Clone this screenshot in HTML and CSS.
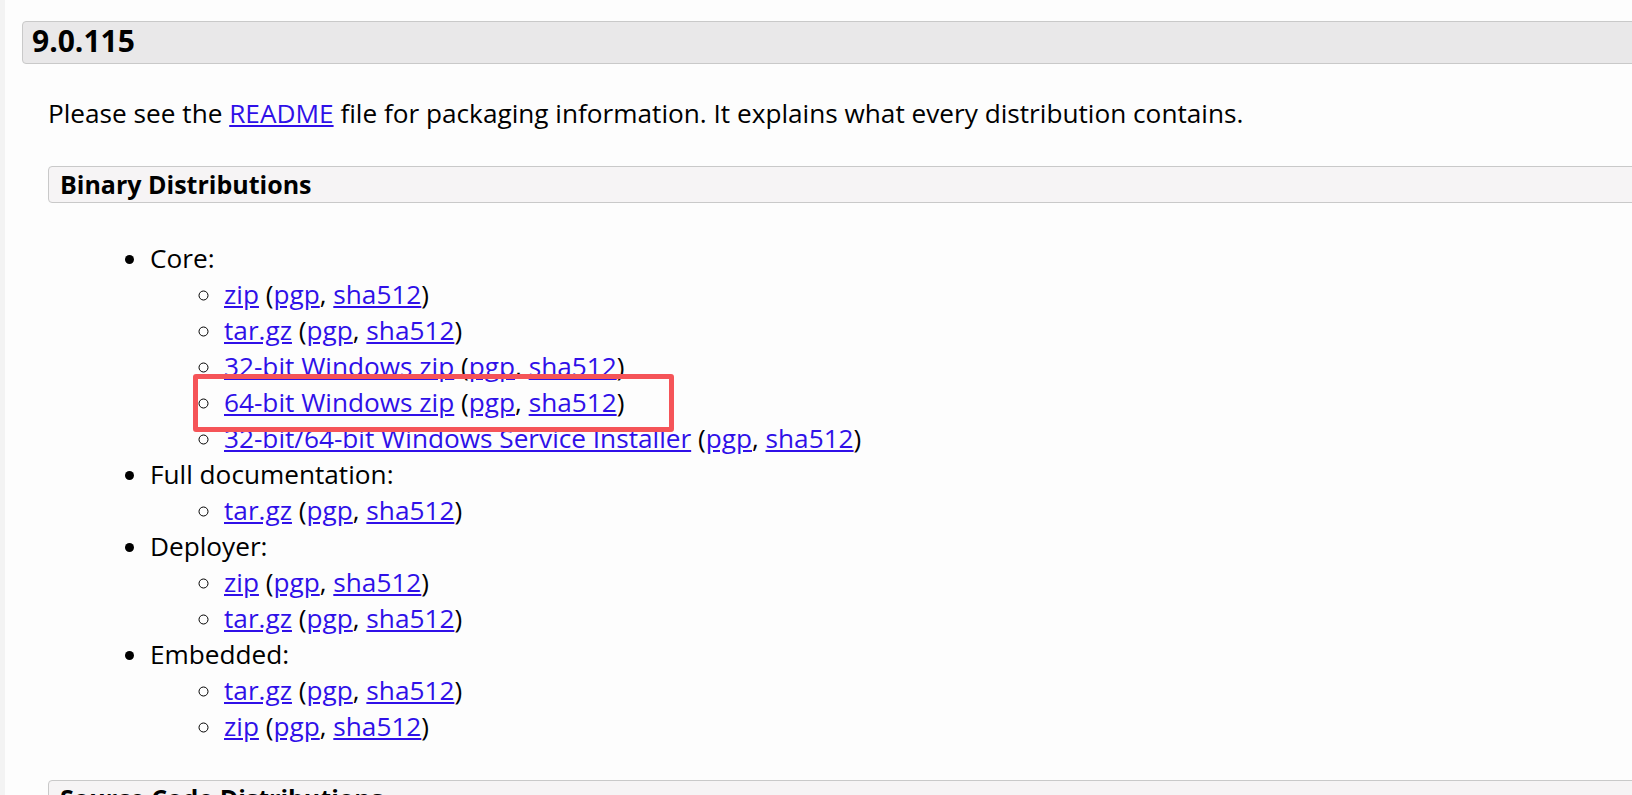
FILE: index.html
```html
<!DOCTYPE html>
<html>
<head>
<meta charset="utf-8">
<link rel="stylesheet" href="styles.css">
</head>
<body>
<div class="page">
  <div class="section">
    <h3 class="version">9.0.115</h3>
    <div class="body">
      <p class="intro">Please see the <a href="#">README</a> file for packaging information. It explains what every distribution contains.</p>
      <h4 class="sub">Binary Distributions</h4>
      <ul class="dist">
        <li>Core:
          <ul>
            <li><a href="#">zip</a> (<a href="#">pgp</a>, <a href="#">sha512</a>)</li>
            <li><a href="#">tar.gz</a> (<a href="#">pgp</a>, <a href="#">sha512</a>)</li>
            <li><a href="#">32-bit Windows zip</a> (<a href="#">pgp</a>, <a href="#">sha512</a>)</li>
            <li><a href="#">64-bit Windows zip</a> (<a href="#">pgp</a>, <a href="#">sha512</a>)</li>
            <li><a href="#">32-bit/64-bit Windows Service Installer</a> (<a href="#">pgp</a>, <a href="#">sha512</a>)</li>
          </ul>
        </li>
        <li>Full documentation:
          <ul>
            <li><a href="#">tar.gz</a> (<a href="#">pgp</a>, <a href="#">sha512</a>)</li>
          </ul>
        </li>
        <li>Deployer:
          <ul>
            <li><a href="#">zip</a> (<a href="#">pgp</a>, <a href="#">sha512</a>)</li>
            <li><a href="#">tar.gz</a> (<a href="#">pgp</a>, <a href="#">sha512</a>)</li>
          </ul>
        </li>
        <li>Embedded:
          <ul>
            <li><a href="#">tar.gz</a> (<a href="#">pgp</a>, <a href="#">sha512</a>)</li>
            <li><a href="#">zip</a> (<a href="#">pgp</a>, <a href="#">sha512</a>)</li>
          </ul>
        </li>
      </ul>
      <h4 class="sub">Source Code Distributions</h4>
    </div>
  </div>
  <div class="highlight"></div>
</div>
</body>
</html>
```

FILE: styles.css
```css
html, body {
  margin: 0;
  padding: 0;
  background: #fdfdfd;
}
body {
  font-family: "Open Sans", "Liberation Sans", sans-serif;
  font-size: 26.2px;
  line-height: 36px;
  color: #000;
  height: 795px;
  overflow: hidden;
}
.page {
  position: relative;
  border-left: 5px solid #f3f3f3;
  height: 795px;
  overflow: hidden;
}
.section {
  padding-top: 21px;
  padding-left: 17px;
}
.version {
  margin: 0 -20px 0 0;
  font-size: 30px;
  line-height: 38px;
  font-weight: bold;
  background: #e9e8e9;
  border: 1px solid #c9c9c9;
  border-radius: 4px;
  padding: 0 9px 3px 9px;
}
.body {
  padding-left: 26px;
}
.intro {
  margin: 31.2px 0 0 0;
  padding-left: 0;
}
a {
  color: #2f10e8;
  text-decoration: underline;
}
.sub {
  margin: 34.4px -20px 0 0;
  font-size: 25px;
  line-height: 35px;
  font-weight: bold;
  background: #f6f4f5;
  border: 1px solid #c9c9c9;
  border-radius: 4px;
  padding: 0 11px;
}
.dist {
  margin: 37.2px 0 36.5px 0;
  padding-left: 102px;
  list-style: disc;
}
.dist ul {
  margin: 0;
  padding-left: 74px;
  list-style: circle;
}
.highlight {
  position: absolute;
  left: 188px;
  top: 374px;
  width: 471px;
  height: 48px;
  border: 5px solid #f55458;
  border-radius: 3px;
}
```
